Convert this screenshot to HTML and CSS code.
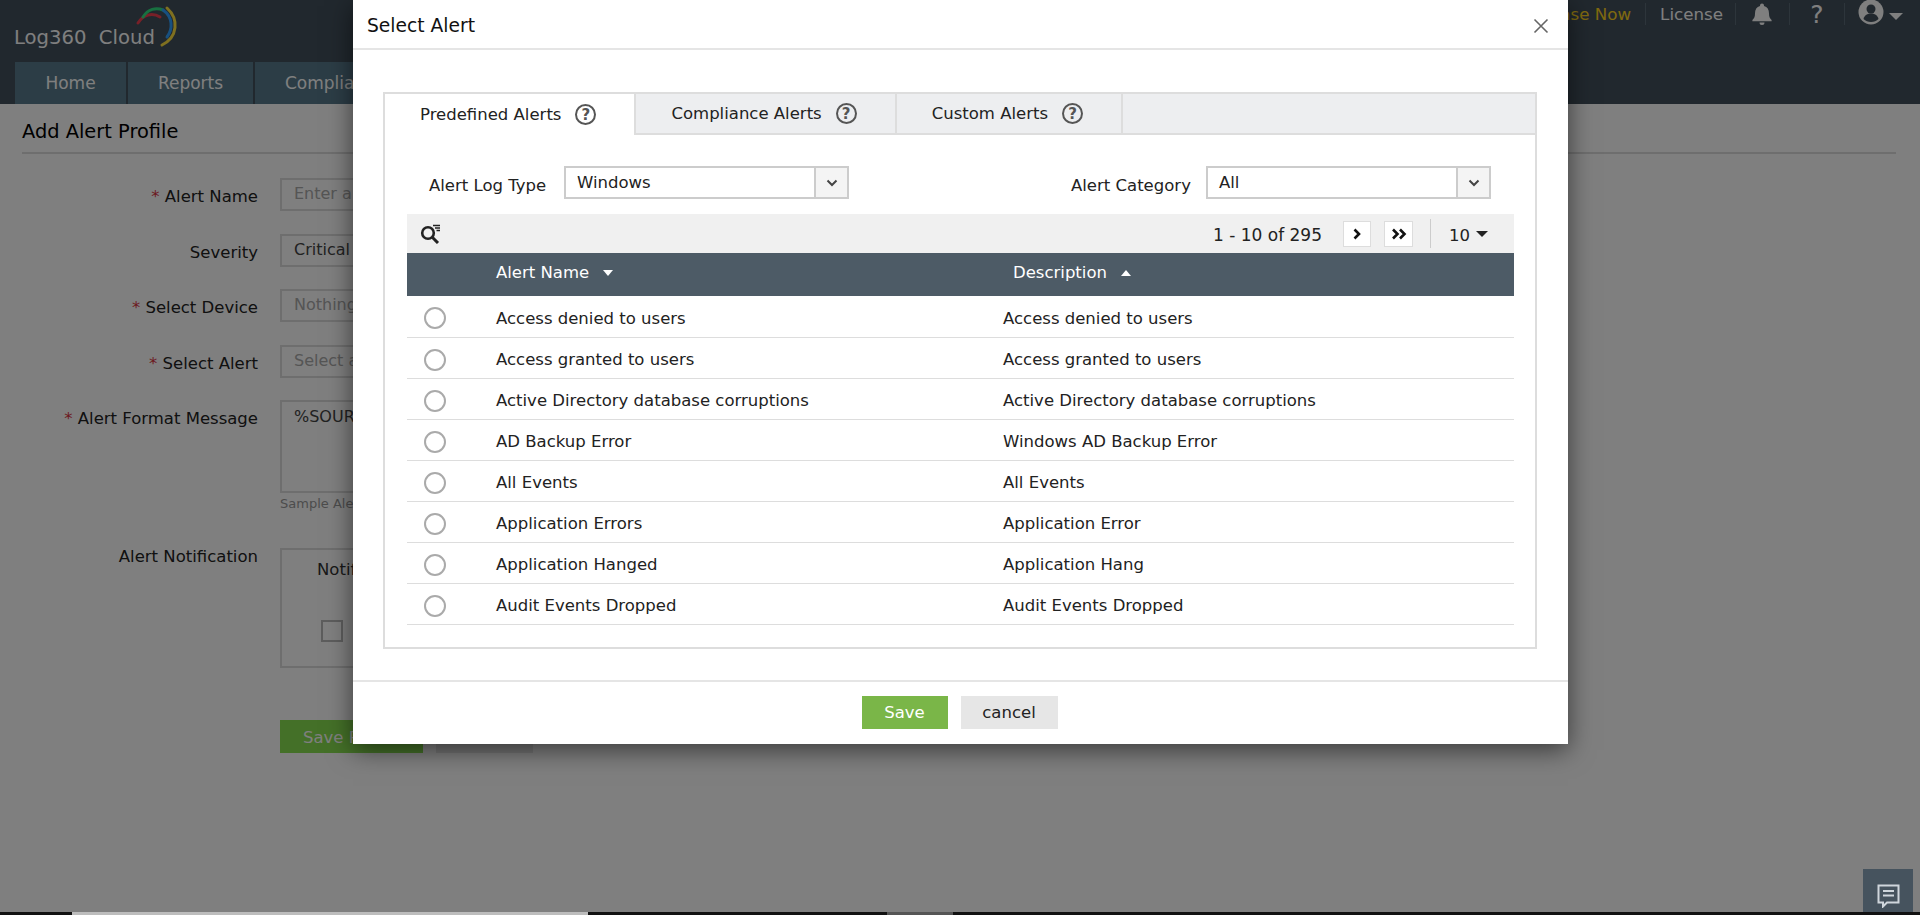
FILE: index.html
```html
<!DOCTYPE html>
<html lang="en">
<head>
<meta charset="utf-8">
<title>Add Alert Profile - Log360 Cloud</title>
<link rel="stylesheet" href="styles.css">
</head>
<body>
<div class="page">
  <header class="topbar">
    <div class="logo">
      <span class="logo-text">Log360&nbsp; Cloud</span>
      <svg class="logo-arcs" viewBox="0 0 46 44" width="46" height="44" fill="none" stroke-linecap="round">
        <path d="M3 18 C8 10 17 7 25 12" stroke="#f04050" stroke-width="3"/>
        <path d="M8 12 C13 4 21 2 28 5" stroke="#30e080" stroke-width="3"/>
        <path d="M28 5 C38 12 38 24 32 32" stroke="#30a0ff" stroke-width="3"/>
        <path d="M32 3 C44 14 43 32 27 40" stroke="#ffe040" stroke-width="3"/>
      </svg>
    </div>
    <nav class="top-links">
      <a class="purchase">Purchase Now</a>
      <span class="sep"></span>
      <a class="license">License</a>
      <span class="sep"></span>
      <svg class="bell" viewBox="0 0 22 24" width="22" height="24"><path fill="#fff" d="M11 1.500a2 2 0 0 1 2 2v.6c3.400.9 5 3.600 5 7.400 0 3.400.9 4.900 2.600 6.500v1.200H1.400v-1.200C3.100 16.400 4 14.900 4 11.500c0-3.800 1.600-6.500 5-7.400v-.6a2 2 0 0 1 2-2zM8.500 20.500h5a2.500 2.500 0 0 1-5 0z"/></svg>
      <span class="sep"></span>
      <span class="qmark">?</span>
      <span class="sep"></span>
      <svg class="user" viewBox="0 0 26 26" width="26" height="26"><circle cx="13" cy="13" r="12.500" fill="#fff"/><circle cx="13" cy="10" r="4.500" fill="#42505c"/><path fill="#42505c" d="M5.500 20c1-4 4-5.500 7.500-5.500s6.500 1.500 7.500 5.500c-2 2-4.500 3-7.500 3s-5.500-1-7.500-3z"/></svg>
      <span class="caret-light"></span>
    </nav>
  </header>
  <div class="navbar">
    <a class="nav-tab nav-home">Home</a>
    <a class="nav-tab nav-reports">Reports</a>
    <a class="nav-tab nav-compliance">Compliance</a>
  </div>
  <main class="content">
    <h1 class="page-title">Add Alert Profile</h1>
    <form class="profile-form">
      <label class="f-label"><i>*</i> Alert Name</label>
      <div class="f-box f-input placeholder">Enter a name</div>
      <label class="f-label">Severity</label>
      <div class="f-box f-input">Critical</div>
      <label class="f-label"><i>*</i> Select Device</label>
      <div class="f-box f-input placeholder">Nothing selected</div>
      <label class="f-label"><i>*</i> Select Alert</label>
      <div class="f-box f-input placeholder">Select alerts</div>
      <label class="f-label"><i>*</i> Alert Format Message</label>
      <div class="f-msg">
        <div class="f-box f-area">%SOURCE%</div>
        <div class="f-hint">Sample Alert Format</div>
      </div>
      <label class="f-label f-label-notif">Alert Notification</label>
      <div class="notif-box">
        <div class="notif-head">Notification</div>
        <span class="notif-check"></span>
      </div>
      <div class="form-actions">
        <button type="button" class="bg-save">Save Profile</button>
        <button type="button" class="bg-cancel">Cancel</button>
      </div>
    </form>
  </main>
</div>

<div class="overlay"></div>

<section class="modal">
  <header class="modal-head">
    <h2>Select Alert</h2>
    <svg class="close" viewBox="0 0 16 16" width="16" height="16"><path d="M1.500 1.500l13 13M14.500 1.500l-13 13" stroke="#666" stroke-width="1.600" fill="none"/></svg>
  </header>
  <div class="modal-body">
    <div class="tabs">
      <div class="tab-strip">
        <div class="tab active">Predefined Alerts <span class="help">?</span></div>
        <div class="tab">Compliance Alerts <span class="help">?</span></div>
        <div class="tab tab-last">Custom Alerts <span class="help">?</span></div>
      </div>
      <div class="tab-panel">
        <div class="filters">
          <div class="filter">
            <span class="filter-label">Alert Log Type</span>
            <div class="select"><span class="select-val">Windows</span><span class="select-btn"><svg viewBox="0 0 12 8" width="12" height="8"><path d="M1.500 1.500L6 6l4.500-4.500" stroke="#444" stroke-width="2" fill="none"/></svg></span></div>
          </div>
          <div class="filter">
            <span class="filter-label">Alert Category</span>
            <div class="select"><span class="select-val">All</span><span class="select-btn"><svg viewBox="0 0 12 8" width="12" height="8"><path d="M1.500 1.500L6 6l4.500-4.500" stroke="#444" stroke-width="2" fill="none"/></svg></span></div>
          </div>
        </div>
        <div class="toolbar">
          <svg class="search" viewBox="0 0 21 20" width="21" height="20" fill="none" stroke="#222"><circle cx="8" cy="9" r="5.800" stroke-width="2.600"/><path d="M12.500 13.500L18 19" stroke-width="3"/><path d="M13 1.500h7M15 4h5M16.500 6.500h3.500" stroke-width="1.300"/></svg>
          <div class="pager">
            <span class="pager-range">1 - 10 of 295</span>
            <span class="pg-btn"><svg viewBox="0 0 10 12" width="10" height="12"><path d="M2.500 1.500L7 6l-4.500 4.500" stroke="#111" stroke-width="2.600" fill="none"/></svg></span>
            <span class="pg-btn pg-last"><svg viewBox="0 0 16 12" width="16" height="12"><path d="M2 1.500L6.500 6 2 10.500M9 1.500L13.500 6 9 10.500" stroke="#111" stroke-width="2.600" fill="none"/></svg></span>
            <span class="pg-sep"></span>
            <span class="pg-size">10</span>
            <span class="caret-down dark"></span>
          </div>
        </div>
        <table class="grid">
          <colgroup><col class="c-radio"><col class="c-name"><col></colgroup>
          <thead>
            <tr><th></th><th>Alert Name<span class="caret-down"></span></th><th class="th-desc">Description<span class="caret-up"></span></th></tr>
          </thead>
          <tbody>
            <tr><td><span class="radio"></span></td><td>Access denied to users</td><td>Access denied to users</td></tr>
            <tr><td><span class="radio"></span></td><td>Access granted to users</td><td>Access granted to users</td></tr>
            <tr><td><span class="radio"></span></td><td>Active Directory database corruptions</td><td>Active Directory database corruptions</td></tr>
            <tr><td><span class="radio"></span></td><td>AD Backup Error</td><td>Windows AD Backup Error</td></tr>
            <tr><td><span class="radio"></span></td><td>All Events</td><td>All Events</td></tr>
            <tr><td><span class="radio"></span></td><td>Application Errors</td><td>Application Error</td></tr>
            <tr><td><span class="radio"></span></td><td>Application Hanged</td><td>Application Hang</td></tr>
            <tr><td><span class="radio"></span></td><td>Audit Events Dropped</td><td>Audit Events Dropped</td></tr>
          </tbody>
        </table>
      </div>
    </div>
  </div>
  <footer class="modal-foot">
    <button type="button" class="btn-save">Save</button>
    <button type="button" class="btn-cancel">cancel</button>
  </footer>
</section>

<button type="button" class="chat" aria-label="Feedback">
  <svg viewBox="0 0 23 24" width="23" height="24" fill="none" stroke="#cfd6dc"><path d="M1.500 1.500h20v17H10l-4 4v-4H1.500z" stroke-width="2"/><path d="M6 7h11M6 11.500h11" stroke-width="2"/></svg>
</button>

<div class="scrollbar"><span class="sb-a"></span><span class="sb-b"></span></div>
</body>
</html>
```
FILE: styles.css
```css
* { box-sizing: border-box; }
html, body { margin: 0; height: 100%; }
body {
  position: relative;
  width: 1920px;
  height: 915px;
  overflow: hidden;
  background: #fff;
  color: #333;
  font-family: "DejaVu Sans", Verdana, sans-serif;
  font-size: 16.500px;
}

/* Background page */
.topbar {
  height: 62px;
  display: flex;
  justify-content: space-between;
  background: #42505c;
}
.logo { position: relative; width: 200px; }
.logo-text {
  position: absolute;
  left: 14px;
  top: 26px;
  color: #fff;
  font-size: 19.600px;
  white-space: nowrap;
}
.logo-arcs { position: absolute; left: 135px; top: 5px; }
.top-links {
  display: flex;
  align-items: center;
  height: 27px;
  padding-right: 17px;
  color: #fff;
  font-size: 16.700px;
}
.purchase { color: #ffd320; padding: 1px 1px 0 0; }
.license { color: #fff; padding-top: 1px; margin-left: 1px; }
.sep { width: 1px; height: 22px; background: #5a6a76; margin: 0 13px; }
.license + .sep { margin-left: 12px; }
.bell { margin: 0 3px 0 2px; }
.qmark { font-size: 25px; width: 28px; text-align: center; padding-top: 2px; }
.user { margin-bottom: 3px; }
.caret-light {
  margin-left: 5px;
  margin-top: 5px;
  border-left: 7.500px solid transparent;
  border-right: 7.500px solid transparent;
  border-top: 7px solid #fff;
}
.navbar {
  height: 42px;
  display: flex;
  gap: 2px;
  padding-left: 15px;
  background: #42505c;
}
.nav-tab {
  display: flex;
  align-items: center;
  justify-content: center;
  background: #587a8c;
  color: #fff;
  font-size: 17px;
}
.nav-home { width: 111px; }
.nav-reports { width: 125px; }
.nav-compliance { width: 160px; }
.content { padding: 0 24px 0 22px; }
.page-title {
  margin: 0;
  height: 50px;
  padding-top: 16px;
  font-size: 19.400px;
  font-weight: 400;
  color: #000;
  border-bottom: 2px solid #ddd;
}
.profile-form {
  display: grid;
  grid-template-columns: 236px 1fr;
  column-gap: 22px;
  row-gap: 22.500px;
  padding-top: 24px;
}
.f-label { text-align: right; padding-top: 9px; font-size: 16.500px; color: #222; }
.f-label i { color: #d9333f; font-style: normal; }
.f-box { border: 2px solid #ddd; padding: 0 12px; color: #444; background: #fff; font-size: 16px; }
.f-input { height: 33px; line-height: 28px; width: 300px; }
.placeholder { color: #aaa; }
.f-area { height: 93px; width: 300px; padding-top: 5px; }
.f-hint { font-size: 13px; color: #999; padding-top: 3px; }
.f-msg { height: 125px; }
.notif-box {
  position: relative;
  width: 300px;
  height: 120px;
  border: 2px solid #ddd;
}
.notif-head { position: absolute; left: 35px; top: 10px; color: #333; }
.notif-check {
  position: absolute;
  left: 39px;
  top: 70px;
  width: 22px;
  height: 22px;
  border: 2px solid #bbb;
}
.f-label-notif { padding-top: 0; margin-top: -1px; }
.form-actions {
  grid-column: 2;
  margin-top: 30px;
  display: flex;
  gap: 13px;
}
.bg-save, .bg-cancel { border: 0; height: 33px; font: inherit; padding: 0; }
.bg-save { width: 143px; background: #88e050; color: #fff; text-align: left; padding: 2px 0 0 23px; }
.bg-cancel { width: 97px; background: #e6e6e6; }

.overlay {
  position: absolute;
  inset: 0;
  background: rgba(0, 0, 0, .5);
}

/* Modal */
.modal {
  position: absolute;
  left: 353px;
  top: 0;
  width: 1215px;
  height: 744px;
  display: flex;
  flex-direction: column;
  background: #fff;
  box-shadow: 0 6px 24px rgba(0, 0, 0, .55);
}
.modal-head {
  height: 50px;
  flex: none;
  display: flex;
  align-items: center;
  justify-content: space-between;
  padding: 3px 19px 0 14px;
  border-bottom: 2px solid #e5e5e5;
}
.modal-head h2 { margin: 0; font-size: 18.700px; font-weight: 400; color: #111; }
.modal-body { flex: 1; padding: 42px 31px 0 30px; }
.tabs { height: 557px; border: 2px solid #ddd; }
.tab-strip {
  display: flex;
  height: 41px;
  background: #edeef0;
  border-bottom: 2px solid #ddd;
}
.tab {
  display: flex;
  align-items: center;
  gap: 14px;
  padding: 0 38px 0 35px;
  border-right: 2px solid #ddd;
  color: #222;
  white-space: nowrap;
}
.tab.active { background: #fff; height: 41px; }
.help {
  display: inline-flex;
  align-items: center;
  justify-content: center;
  width: 21px;
  height: 21px;
  border: 2px solid #555;
  border-radius: 50%;
  color: #555;
  font-size: 15px;
  font-weight: 700;
}
.tab-panel { padding: 31px 21px 0 22px; }
.filters {
  display: flex;
  justify-content: space-between;
  padding: 0 23px 0 22px;
}
.filter { display: flex; align-items: flex-start; gap: 15px; }
.filter-label { min-width: 120px; padding-top: 10px; color: #222; }
.select {
  display: flex;
  width: 285px;
  height: 33px;
  border: 2px solid #ccc;
}
.select-val { flex: 1; padding-left: 11px; line-height: 29px; color: #222; }
.select-btn {
  width: 33px;
  display: flex;
  align-items: center;
  justify-content: center;
  background: #f4f4f4;
  border-left: 2px solid #ccc;
}
.toolbar {
  margin-top: 15px;
  height: 39px;
  display: flex;
  align-items: center;
  justify-content: space-between;
  padding: 0 26px 0 13px;
  background: #f0f0f0;
}
.pager { display: flex; align-items: center; color: #222; }
.pager-range { margin-right: 21px; font-size: 17px; padding-top: 3px; }
.pg-btn {
  width: 28px;
  height: 26px;
  display: flex;
  align-items: center;
  justify-content: center;
  background: #fff;
  border: 1px solid #ddd;
}
.pg-last { width: 29px; margin-left: 13px; }
.pg-sep { width: 1px; height: 29px; background: #ccc; margin: 0 18px 0 17px; }
.pg-size { margin-right: 6px; padding-top: 3px; }
.caret-down, .caret-up {
  display: inline-block;
  border-left: 5.500px solid transparent;
  border-right: 5.500px solid transparent;
  margin-left: 14px;
  vertical-align: 2px;
}
.caret-down { border-top: 6px solid #fff; }
.caret-up { border-bottom: 6px solid #fff; }
.caret-down.dark { border-top-color: #222; border-left-width: 6px; border-right-width: 6px; margin-left: 0; }
.grid {
  width: 100%;
  table-layout: fixed;
  border-collapse: collapse;
}
.c-radio { width: 89px; }
.c-name { width: 507px; }
.grid th {
  height: 43px;
  padding: 0 0 4px;
  background: #4d5b66;
  color: #fff;
  font-weight: 400;
  text-align: left;
}
.grid .th-desc { padding-left: 10px; }
.grid td {
  height: 41px;
  padding: 4px 0 0;
  border-bottom: 1px solid #ddd;
  color: #222;
}
.grid td:first-child { padding-left: 17px; }
.radio {
  display: block;
  width: 22px;
  height: 22px;
  border: 2px solid #aaa;
  border-radius: 50%;
}
.modal-foot {
  height: 64px;
  flex: none;
  display: flex;
  justify-content: center;
  align-items: flex-start;
  gap: 13px;
  padding: 14px 2px 0 0;
  border-top: 2px solid #e5e5e5;
}
.btn-save, .btn-cancel {
  height: 33px;
  border: 0;
  padding: 0;
  font: inherit;
}
.btn-save { width: 86px; background: #7ab648; color: #fff; }
.btn-cancel { width: 97px; background: #e6e6e6; color: #222; }

.chat {
  position: absolute;
  left: 1863px;
  top: 869px;
  width: 50px;
  height: 46px;
  padding: 8px 0 0;
  border: 0;
  background: #46535e;
  display: flex;
  align-items: center;
  justify-content: center;
}
.scrollbar {
  position: absolute;
  left: 0;
  right: 0;
  bottom: 0;
  height: 3px;
  background: #111;
  display: flex;
}
.sb-a { width: 516px; margin-left: 72px; background: #bdbdbd; }
.sb-b { width: 66px; margin-left: 299px; background: #555; }
```
